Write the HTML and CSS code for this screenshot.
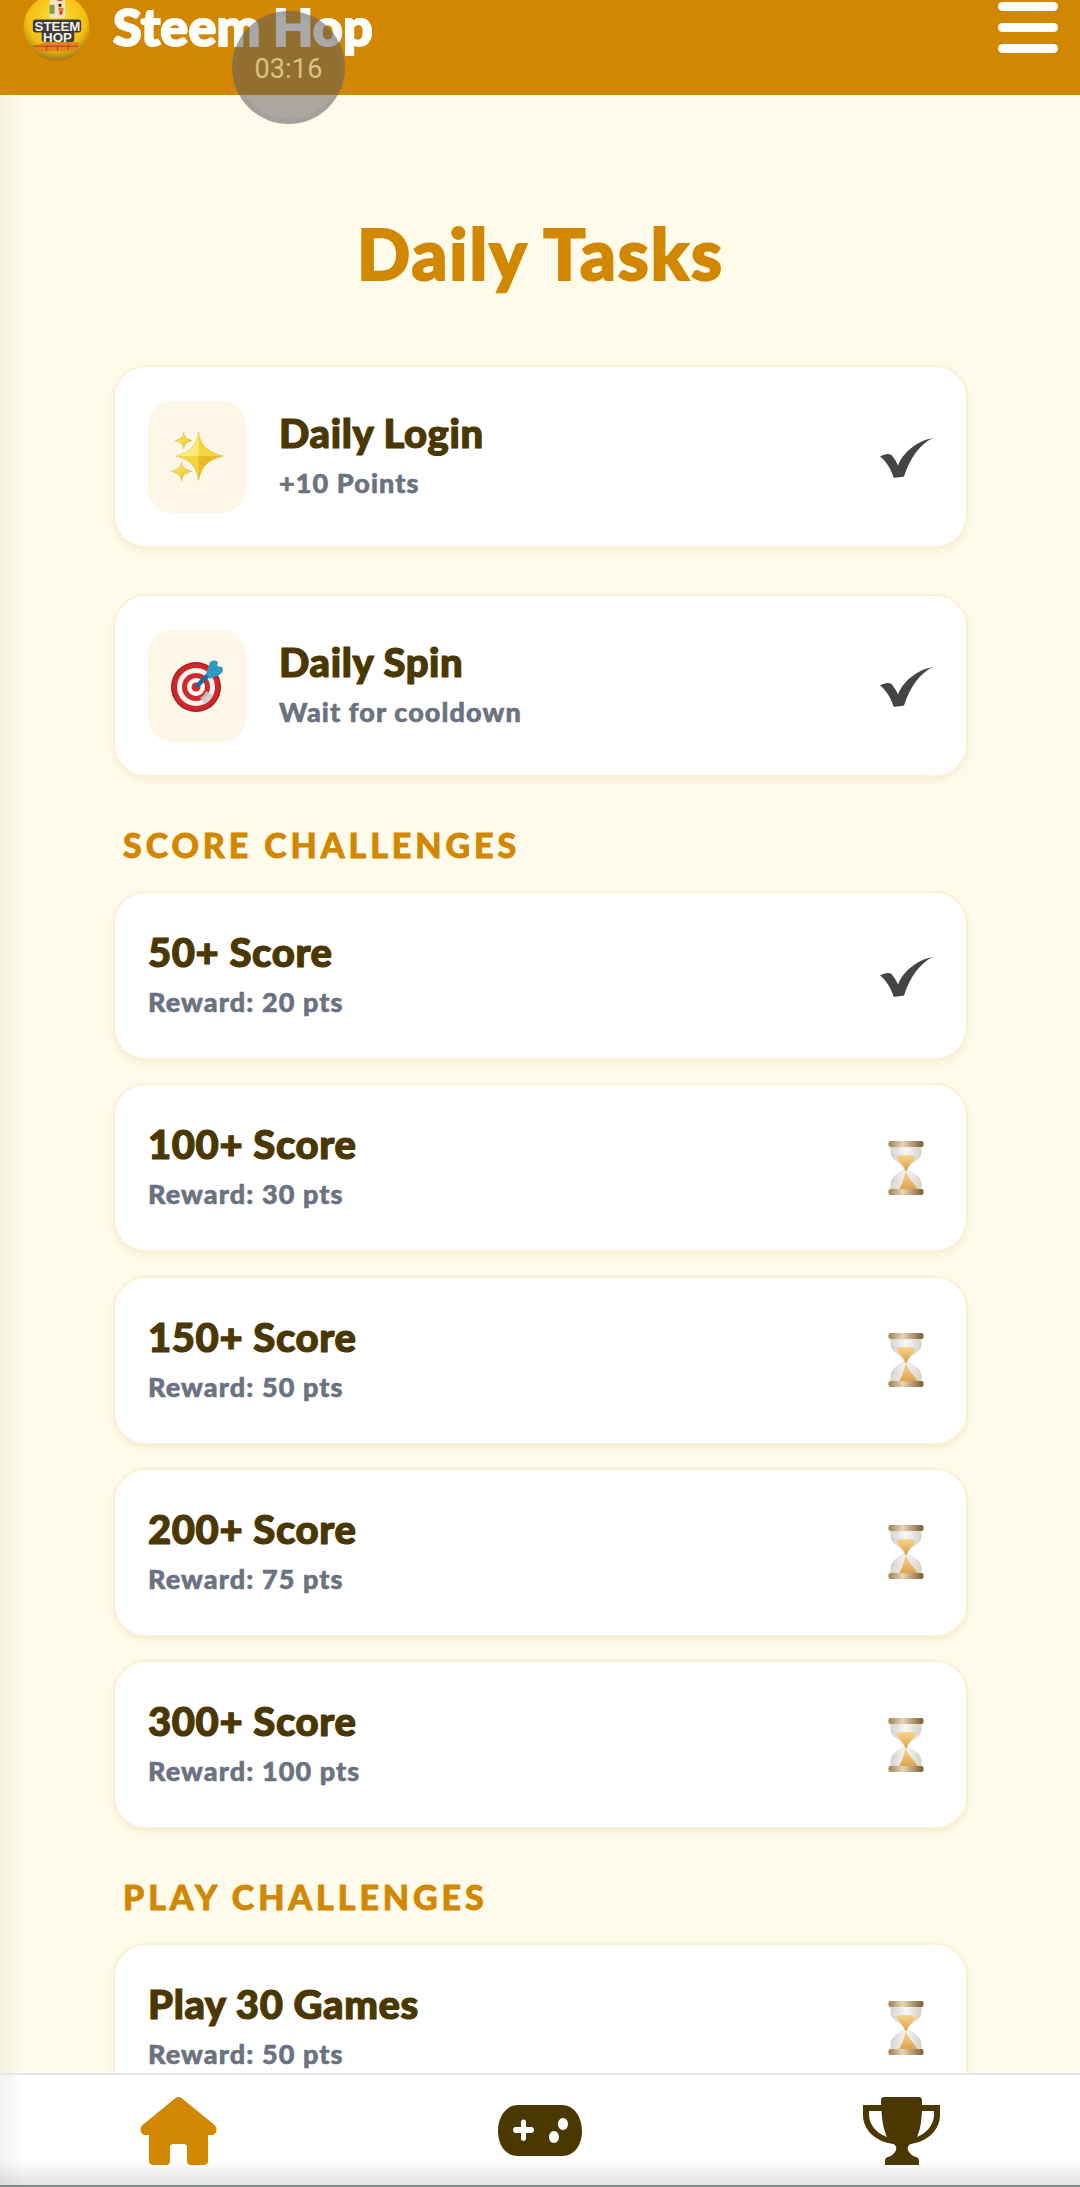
FILE: index.html
```html
<!DOCTYPE html>
<html lang="en">
<head>
<meta charset="utf-8">
<title>Steem Hop - Daily Tasks</title>
<link rel="stylesheet" href="styles.css">
</head>
<body>
<svg class="defs" width="0" height="0" aria-hidden="true">
  <defs>
    <linearGradient id="gold" x1="0" y1="0" x2="1" y2="1"><stop offset="0" stop-color="#fff07a"/><stop offset="1" stop-color="#e9bd1c"/></linearGradient>
    <linearGradient id="brass" x1="0" y1="0" x2="1" y2="0"><stop offset="0" stop-color="#9c7f55"/><stop offset=".4" stop-color="#e6d6b6"/><stop offset="1" stop-color="#7a5c34"/></linearGradient>
    <linearGradient id="sand" x1="0" y1="0" x2="0" y2="1"><stop offset="0" stop-color="#f8d48e"/><stop offset="1" stop-color="#dca24a"/></linearGradient>
    <linearGradient id="glass" x1="0" y1="0" x2="1" y2="0"><stop offset="0" stop-color="#d6d1ca"/><stop offset=".5" stop-color="#f8f7f6"/><stop offset="1" stop-color="#d4cfc8"/></linearGradient>
    <radialGradient id="ball" cx=".5" cy=".38" r=".66"><stop offset="0" stop-color="#ffe33a"/><stop offset=".68" stop-color="#f3bd12"/><stop offset="1" stop-color="#8f6a18"/></radialGradient>
    <symbol id="check" viewBox="0 0 53 40">
      <path d="M0 18.500C4 16 9 15 11.500 17C14 20 16.500 24 18 27.500C23 15 36 3 53 0C40 6 30 20 24 38.500C19 39.500 15 40 13.500 39.500C11 31 6 23 0 18.500Z" fill="#444446"/>
    </symbol>
    <symbol id="hourglass" viewBox="0 0 36 54">
      <path d="M2.500 5H33.500V11C33.500 20 23 22 20 27C23 32 33.500 34 33.500 43V49H2.500V43C2.500 34 13 32 16 27C13 22 2.500 20 2.500 11Z" fill="url(#glass)"/>
      <path d="M8 15C13 13.500 23 13.500 28 15C27 20 21 23 18.700 30H17.300C15 23 9 20 8 15Z" fill="url(#sand)"/>
      <path d="M17.400 31H18.600C20 37 26 42 30 48.500H11C14 43 16 37 17.400 31Z" fill="url(#sand)"/>
      <rect x="0.500" y="0" width="35" height="6" rx="2" fill="url(#brass)"/>
      <rect x="0.500" y="48" width="35" height="6" rx="2" fill="url(#brass)"/>
    </symbol>
  </defs>
</svg>

<header class="topbar">
  <div class="brand">
    <svg class="logo" viewBox="0 0 68 68" role="img" aria-label="Steem Hop logo">
      <circle cx="34" cy="34" r="33.500" fill="url(#ball)"/>
      <rect x="27" y="6" width="16" height="18" rx="2" fill="#f1e4bf"/>
      <rect x="27" y="11" width="5" height="9" fill="#7f9b4e"/>
      <rect x="36" y="10" width="3" height="3" fill="#3b2a1a"/>
      <rect x="35" y="3" width="5" height="4" fill="#cf3a22"/>
      <rect x="36" y="14" width="5" height="3" fill="#e2762b"/>
      <rect x="37" y="17" width="3" height="4" fill="#cf3a22"/>
      <rect x="10" y="26" width="49" height="13" rx="3" fill="#3c3c3a"/>
      <rect x="19" y="37" width="33" height="12" rx="3" fill="#3c3c3a"/>
      <text x="35" y="37.500" class="logo-text" text-anchor="middle">STEEM</text>
      <text x="35" y="48.500" class="logo-text" text-anchor="middle">HOP</text>
      <path d="M10 53L23 49H57L56 56L44 58H13Z" fill="#e8801c"/>
      <path d="M10 53H56M24 52V58M35 52V58M46 50V57" stroke="#8a4a12" stroke-width=".9" fill="none"/>
    </svg>
    <span class="brand-name">Steem Hop</span>
  </div>
  <button class="menu" type="button" aria-label="Menu">
    <span class="menu-bar"></span><span class="menu-bar"></span><span class="menu-bar"></span>
  </button>
</header>

<div class="timer"><span class="timer-text">03:16</span></div>

<main class="content">
  <h1 class="page-title">Daily Tasks</h1>

  <section class="daily">
    <article class="card card-daily">
      <div class="icon-box">
        <svg class="sparkle" viewBox="0 0 49 46">
          <path d="M26 0C27.500 10 31 18 49 22.500C34 26 28.500 33 26 45.500C24 33 19 26 5 22.500C20 18 24.500 10 26 0Z" fill="#f5d53c" stroke="#d9b02a" stroke-width=".5"/>
          <path d="M26 0C24.500 10 20 18 5 22.500L26 22.500Z" fill="#fbe978"/>
          <path d="M26 22.500L49 22.500C34 26 28.500 33 26 45.500Z" fill="#e6bb25"/>
          <path d="M12 .5C12.500 4 14 6.500 20 8C14 9.500 12.500 12 12 16C11.500 12 10 9.500 4 8C10 6.500 11.500 4 12 .5Z" fill="url(#gold)" stroke="#d9b02a" stroke-width=".5"/>
          <path d="M10 28C10.500 33 13 35 19.500 37C13 39 10.500 41 10 46C9.500 41 7 39 .5 37C7 35 9.500 33 10 28Z" fill="url(#gold)" stroke="#d9b02a" stroke-width=".5"/>
        </svg>
      </div>
      <div class="card-text">
        <h2 class="card-title">Daily Login</h2>
        <p class="card-sub">+10 Points</p>
      </div>
      <svg class="status-check"><use href="#check"/></svg>
    </article>

    <article class="card card-daily">
      <div class="icon-box">
        <svg class="target" viewBox="0 0 52 52">
          <circle cx="25" cy="27" r="25" fill="#a81c22"/>
          <circle cx="25" cy="27" r="23.500" fill="#d0272c"/>
          <circle cx="25" cy="27" r="19" fill="#fbf4f0"/>
          <circle cx="25" cy="27" r="14" fill="#cf2a2e"/>
          <circle cx="25" cy="27" r="9" fill="#fff"/>
          <circle cx="25" cy="27" r="4.500" fill="#e8231f"/>
          <path d="M34 44A20 20 0 0 0 42 35L35 31A12 12 0 0 1 29 38Z" fill="#cfcac8" opacity=".85"/>
          <path d="M26 26L39 13" stroke="#1c6a9c" stroke-width="4.500" stroke-linecap="round"/>
          <path d="M35 14L39 2C42 0 46 0 47 3L46 6L51 7C53 10 51 14 48 15L38 19Z" fill="#2c9cc4"/>
        </svg>
      </div>
      <div class="card-text">
        <h2 class="card-title">Daily Spin</h2>
        <p class="card-sub">Wait for cooldown</p>
      </div>
      <svg class="status-check"><use href="#check"/></svg>
    </article>
  </section>

  <section class="group">
    <h3 class="group-title">SCORE CHALLENGES</h3>
    <article class="card card-task">
      <div class="card-text"><h2 class="card-title">50+ Score</h2><p class="card-sub">Reward: 20 pts</p></div>
      <svg class="status-check"><use href="#check"/></svg>
    </article>
    <article class="card card-task">
      <div class="card-text"><h2 class="card-title">100+ Score</h2><p class="card-sub">Reward: 30 pts</p></div>
      <svg class="status-wait"><use href="#hourglass"/></svg>
    </article>
    <article class="card card-task">
      <div class="card-text"><h2 class="card-title">150+ Score</h2><p class="card-sub">Reward: 50 pts</p></div>
      <svg class="status-wait"><use href="#hourglass"/></svg>
    </article>
    <article class="card card-task">
      <div class="card-text"><h2 class="card-title">200+ Score</h2><p class="card-sub">Reward: 75 pts</p></div>
      <svg class="status-wait"><use href="#hourglass"/></svg>
    </article>
    <article class="card card-task">
      <div class="card-text"><h2 class="card-title">300+ Score</h2><p class="card-sub">Reward: 100 pts</p></div>
      <svg class="status-wait"><use href="#hourglass"/></svg>
    </article>
  </section>

  <section class="group">
    <h3 class="group-title">PLAY CHALLENGES</h3>
    <article class="card card-task">
      <div class="card-text"><h2 class="card-title">Play 30 Games</h2><p class="card-sub">Reward: 50 pts</p></div>
      <svg class="status-wait"><use href="#hourglass"/></svg>
    </article>
  </section>
</main>

<nav class="bottom-nav">
  <a class="nav-item" aria-label="Home">
    <svg class="nav-house" viewBox="0 0 77 68">
      <path d="M35 1.500C37 -.5 40 -.5 42 1.500L74.500 28C78 31 76.500 38 72 38H68V64C68 66.500 66 68 64 68H51C48.500 68 47 66.500 47 64V50C47 48 45.500 47 44 47H33C31.500 47 30 48 30 50V64C30 66.500 28.500 68 26 68H13C11 68 9 66.500 9 64V38H5C.5 38 -1 31 2.500 28Z" fill="#d18700"/>
    </svg>
  </a>
  <a class="nav-item" aria-label="Games">
    <svg class="nav-pad" viewBox="0 0 84 51">
      <path fill-rule="evenodd" d="M20 0H64C76 0 84 12 84 26C84 38 78 51 64 51H20C6 51 0 38 0 26C0 12 8 0 20 0ZM23 17V22H17.500C16 22 15 23.500 15 25C15 26.500 16 28 17.500 28H23V33.500C23 35 24 36 25.500 36C27 36 28 35 28 33.500V28H33.500C35 28 36 26.500 36 25C36 23.500 35 22 33.500 22H28V17C28 15.500 27 14.500 25.500 14.500C24 14.500 23 15.500 23 17ZM65 25C68 25 70 22 70 19C70 16 68 13 65 13C62 13 60 16 60 19C60 22 62 25 65 25ZM56 38C59 38 61 35 61 32C61 29 59 26 56 26C53 26 51 29 51 32C51 35 53 38 56 38Z" fill="#4a3800"/>
    </svg>
  </a>
  <a class="nav-item" aria-label="Leaderboard">
    <svg class="nav-trophy" viewBox="0 0 77 68">
      <path fill-rule="evenodd" d="M18 3C18 1 19.500 0 21 0H56C57.500 0 59 1 59 3V8H77V18C77 32 66 44 48 47C44 48 44 53 46 55C48 57 49 59 53 60C55 60.500 56 62 56 64V68H22V64C22 62 23 60.500 25 60C29 59 30 57 32 55C34 53 34 48 30 47C11 44 0 32 0 18V8H18ZM6 14V18C6 27 13 36 24 40C20 31 19 22 18.500 14ZM71 14H59C58.500 22 58 31 54 40C64 36 71 27 71 18Z" fill="#4a3800"/>
    </svg>
  </a>
</nav>
</body>
</html>
```
FILE: styles.css
```css
* { box-sizing: border-box; }

html, body { margin: 0; padding: 0; }

body {
  width: 1080px;
  height: 2187px;
  overflow: hidden;
  position: relative;
  display: flex;
  flex-direction: column;
  background: #fffbeb;
  font-family: "Lato", "Noto Sans", sans-serif;
}

.defs { position: absolute; }

.topbar {
  flex: none;
  height: 95px;
  background: #d18700;
  display: flex;
  justify-content: space-between;
  align-items: flex-start;
  padding-right: 22px;
}

.brand {
  display: flex;
  align-items: flex-start;
  padding-left: 23px;
  margin-top: -6px;
}

.logo { width: 67px; height: 67px; display: block; }

.logo-text {
  font-family: "Liberation Sans", sans-serif;
  font-weight: 700;
  font-size: 13.5px;
  fill: #f4f1e6;
}

.brand-name {
  margin-left: 23px;
  margin-top: 7px;
  font-size: 52px;
  line-height: 50px;
  font-weight: 900;
  color: #fff;
  -webkit-text-stroke: 2px #fff;
  letter-spacing: .2px;
}

.menu {
  margin: 2px 0 0;
  padding: 0;
  border: 0;
  background: none;
  display: flex;
  flex-direction: column;
  gap: 12px;
}

.menu-bar {
  display: block;
  width: 60px;
  height: 9px;
  border-radius: 5px;
  background: #fff;
}

.timer {
  position: absolute;
  left: 232px;
  top: 11px;
  width: 113px;
  height: 113px;
  border-radius: 50%;
  background: rgba(90, 90, 90, .52);
  border: 5px solid rgba(130, 130, 130, .14);
  display: flex;
  align-items: center;
  justify-content: center;
}

.timer-text {
  font-family: "Roboto", sans-serif;
  font-size: 27px;
  margin-top: 2px;
  color: #dcc08a;
  letter-spacing: .2px;
}

.content {
  flex: 1;
  min-height: 0;
  overflow: hidden;
  padding: 0 112px 0 113px;
  background: linear-gradient(to right, #f6f1dd, #fffbeb 24px);
}

.page-title {
  margin: 116px 0 0;
  height: 154px;
  text-align: center;
  font-size: 70px;
  line-height: 84px;
  font-weight: 900;
  color: #d18700;
  -webkit-text-stroke: 2px #d18700;
  letter-spacing: 2px;
}

.daily {
  display: flex;
  flex-direction: column;
  gap: 46px;
}

.card {
  display: flex;
  align-items: center;
  background: #fff;
  border: 2px solid #fbf1d6;
  border-radius: 33px;
  box-shadow: 0 3px 6px rgba(190, 160, 90, .16);
  padding: 0 33px;
}

.card-daily { height: 183px; gap: 33px; }

.card-task { height: 169px; }

.icon-box {
  flex: none;
  width: 98px;
  height: 112px;
  border-radius: 24px;
  background: #fdf7e8;
  display: flex;
  align-items: center;
  justify-content: center;
}

.sparkle { width: 52px; height: 49px; margin-left: -1px; }

.target { width: 52px; height: 52px; }

.card-text { flex: 1; min-width: 0; padding-bottom: 3px; }

.card-title {
  margin: 0;
  font-size: 40px;
  line-height: 48px;
  font-weight: 900;
  color: #4a3800;
  -webkit-text-stroke: 1.2px #4a3800;
  letter-spacing: .6px;
}

.card-sub {
  margin: 8px 0 0;
  font-size: 27px;
  line-height: 36px;
  font-weight: 900;
  color: #6b7280;
  -webkit-text-stroke: .6px #6b7280;
  letter-spacing: 1.1px;
}

.status-check { flex: none; width: 53px; height: 40px; margin-top: 2px; }

.status-wait { flex: none; width: 36px; height: 54px; margin-right: 9px; }

.group {
  display: flex;
  flex-direction: column;
  gap: 23.25px;
}

.group-title {
  margin: 48px 0 2.75px;
  padding-left: 10px;
  font-size: 34px;
  line-height: 40px;
  font-weight: 900;
  color: #d18700;
  -webkit-text-stroke: .8px #d18700;
  letter-spacing: 3.9px;
}

.bottom-nav {
  flex: none;
  height: 114px;
  border-top: 2px solid #e5e7eb;
  background:
    linear-gradient(to bottom, rgba(120, 125, 125, 0) 76%, rgba(120, 125, 125, .22) 98%, #7f8a88 98.500%),
    linear-gradient(to right, #f3f3f3, #fff 24px);
  display: grid;
  grid-template-columns: repeat(3, 1fr);
  position: relative;
  z-index: 1;
}

.nav-item {
  display: flex;
  align-items: flex-start;
  justify-content: center;
  padding-top: 22px;
}

.nav-house { width: 77px; height: 68px; margin-left: -3px; }

.nav-pad { width: 84px; height: 51px; margin-top: 8px; }

.nav-trophy { width: 77px; height: 68px; margin-left: 3px; }
```
